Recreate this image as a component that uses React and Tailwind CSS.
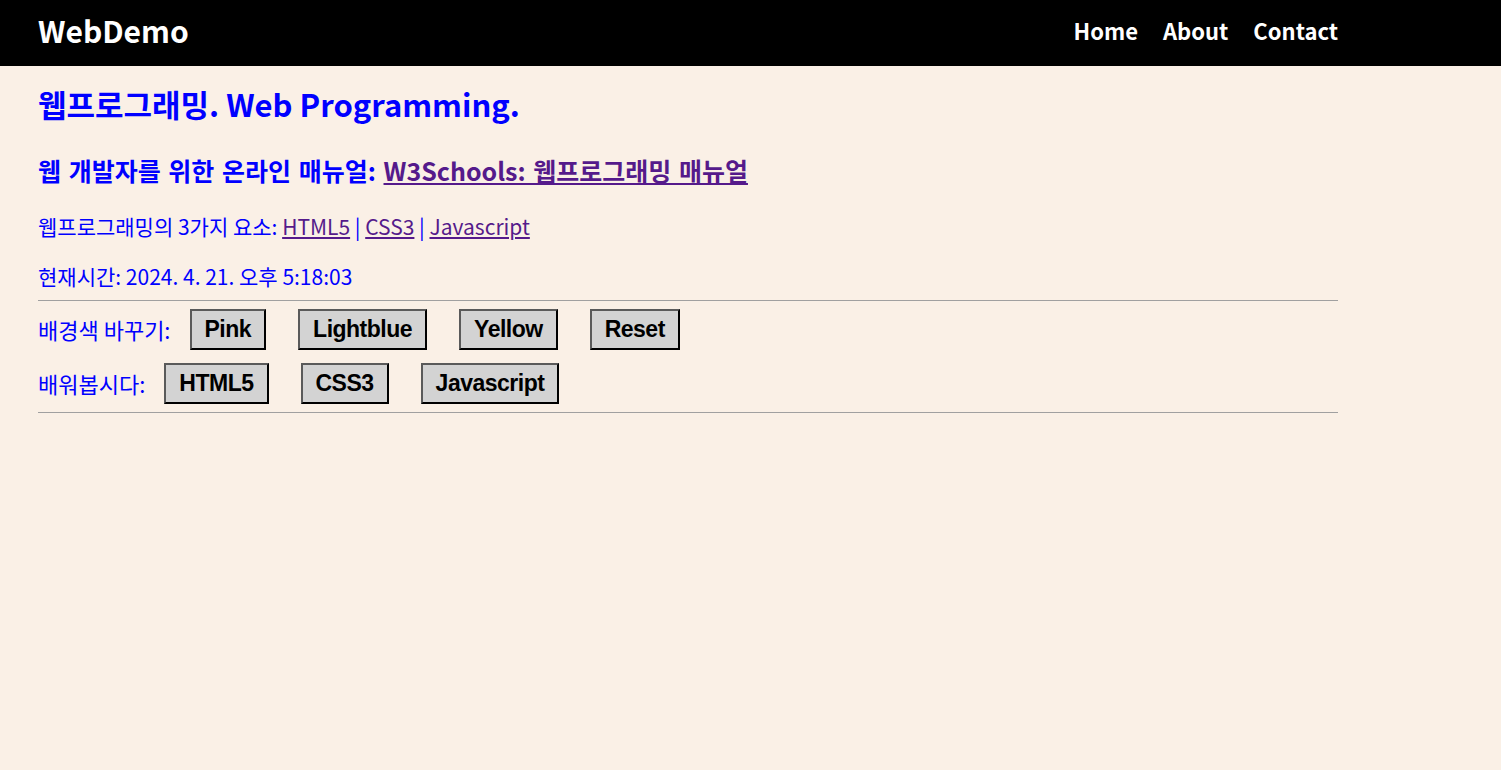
export default function App() {
  const kr = { fontFamily: '"Noto Sans CJK KR", "Noto Sans", sans-serif' };
  const btn =
    "bg-[#d3d3d3] border-2 border-t-[#5a5a5a] border-l-[#5a5a5a] border-r-black border-b-black px-[13px] py-[6px] text-[23px] leading-[25px] tracking-[-0.5px] font-bold text-black";
  const btnFont = { fontFamily: '"Liberation Sans", Arial, sans-serif' };
  return (
    <div className="min-h-[770px] bg-[#faf0e6]" style={kr}>
      <header className="bg-black h-[66px]">
        <div className="w-[1300px] ml-[38px] h-full flex items-center justify-between pb-[6px]">
          <div className="text-white font-bold text-[30px] leading-none">WebDemo</div>
          <nav className="flex gap-[25px] text-white font-bold text-[22px] leading-none">
            <a>Home</a>
            <a>About</a>
            <a>Contact</a>
          </nav>
        </div>
      </header>
      <main className="w-[1300px] ml-[38px] text-[#0000ff]">
        <h1 className="mt-[18px] text-[31px] leading-[40px] font-bold">웹프로그래밍. Web Programming.</h1>
        <h3 className="mt-[30px] text-[25px] leading-[32px] font-bold [word-spacing:2px]">
          웹 개발자를 위한 온라인 매뉴얼:{" "}
          <a className="text-[#551a8b] underline">W3Schools: 웹프로그래밍 매뉴얼</a>
        </h3>
        <p className="mt-[26px] text-[21px] leading-[28px]">
          웹프로그래밍의 3가지 요소: <a className="text-[#551a8b] underline">HTML5</a> |{" "}
          <a className="text-[#551a8b] underline">CSS3</a> |{" "}
          <a className="text-[#551a8b] underline">Javascript</a>
        </p>
        <p className="mt-[22px] text-[21px] leading-[28px]">현재시간: 2024. 4. 21. 오후 5:18:03</p>
        <div className="mt-[10px] h-px bg-[#a0a0a0]" />
        <div className="mt-[8px] flex items-center text-[22px]">
          <span className="mr-[19px]">배경색 바꾸기:</span>
          <div className="flex gap-[32px]" style={btnFont}>
            <button className={btn}>Pink</button>
            <button className={btn}>Lightblue</button>
            <button className={btn}>Yellow</button>
            <button className={btn}>Reset</button>
          </div>
        </div>
        <div className="mt-[13px] flex items-center text-[22px]">
          <span className="mr-[19px]">배워봅시다:</span>
          <div className="flex gap-[32px]" style={btnFont}>
            <button className={btn}>HTML5</button>
            <button className={btn}>CSS3</button>
            <button className={btn}>Javascript</button>
          </div>
        </div>
        <div className="mt-[8px] h-px bg-[#a0a0a0]" />
      </main>
    </div>
  );
}
